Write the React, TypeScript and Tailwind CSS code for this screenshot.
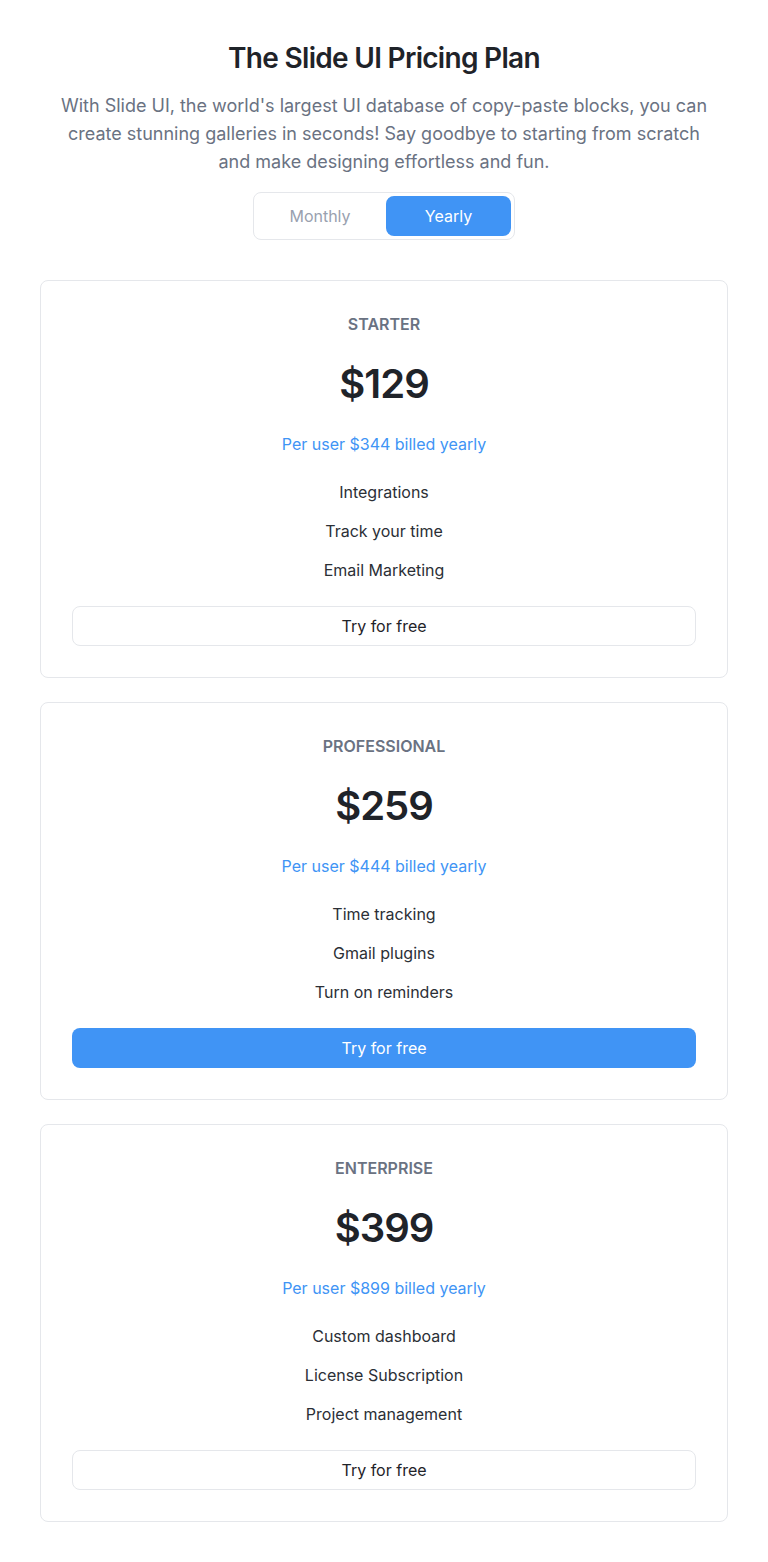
import { useState } from 'react';

interface Plan {
  name: string;
  price: string;
  billed: string;
  features: string[];
  featured?: boolean;
}

const plans: Plan[] = [
  {
    name: 'Starter',
    price: '$129',
    billed: 'Per user $344 billed yearly',
    features: ['Integrations', 'Track your time', 'Email Marketing'],
  },
  {
    name: 'Professional',
    price: '$259',
    billed: 'Per user $444 billed yearly',
    features: ['Time tracking', 'Gmail plugins', 'Turn on reminders'],
    featured: true,
  },
  {
    name: 'Enterprise',
    price: '$399',
    billed: 'Per user $899 billed yearly',
    features: ['Custom dashboard', 'License Subscription', 'Project management'],
  },
];

function PlanCard({ plan }: { plan: Plan }) {
  return (
    <div className="rounded-lg border border-gray-200 bg-white px-[31px] pt-[31px] pb-[31px] text-center">
      <h3 className="text-base leading-6 font-semibold uppercase text-gray-500">{plan.name}</h3>
      <p className="mt-6 text-[40px] leading-[48px] font-semibold tracking-tight text-[#1f2329]">{plan.price}</p>
      <p className="mt-6 text-base leading-6 text-[#4094f5]">{plan.billed}</p>
      <ul className="mt-6 flex flex-col gap-[15px]">
        {plan.features.map((f) => (
          <li key={f} className="text-base leading-6 text-[#2b2f36]">
            {f}
          </li>
        ))}
      </ul>
      <button
        className={`mt-6 h-10 w-full rounded-lg text-base ${
          plan.featured
            ? 'bg-[#4094f5] text-white'
            : 'border border-gray-200 bg-white text-[#1f2329]'
        }`}
      >
        Try for free
      </button>
    </div>
  );
}

export default function App() {
  const [yearly, setYearly] = useState(true);

  return (
    <div className="min-h-screen bg-white font-['Inter',sans-serif]">
      <div className="mx-auto max-w-[688px] pt-[38px] pb-10">
        <div className="text-center">
          <h2 className="text-[28px] leading-10 font-semibold tracking-tight text-[#1f2329]">
            The Slide UI Pricing Plan
          </h2>
          <p className="mx-auto mt-[14px] max-w-[660px] text-lg leading-7 text-gray-500">
            With Slide UI, the world's largest UI database of copy-paste blocks, you can create stunning
            galleries in seconds! Say goodbye to starting from scratch and make designing effortless and fun.
          </p>
          <div className="mt-4 inline-flex gap-[3px] rounded-lg border border-gray-200 bg-white p-[3px]">
            <button
              onClick={() => setYearly(false)}
              className={`h-10 w-[126px] rounded-lg text-base ${
                !yearly ? 'bg-[#4094f5] text-white' : 'text-gray-400'
              }`}
            >
              Monthly
            </button>
            <button
              onClick={() => setYearly(true)}
              className={`h-10 w-[125px] rounded-lg text-base ${
                yearly ? 'bg-[#4094f5] text-white' : 'text-gray-400'
              }`}
            >
              Yearly
            </button>
          </div>
        </div>

        <div className="mt-10 flex flex-col gap-6">
          {plans.map((p) => (
            <PlanCard key={p.name} plan={p} />
          ))}
        </div>
      </div>
    </div>
  );
}
